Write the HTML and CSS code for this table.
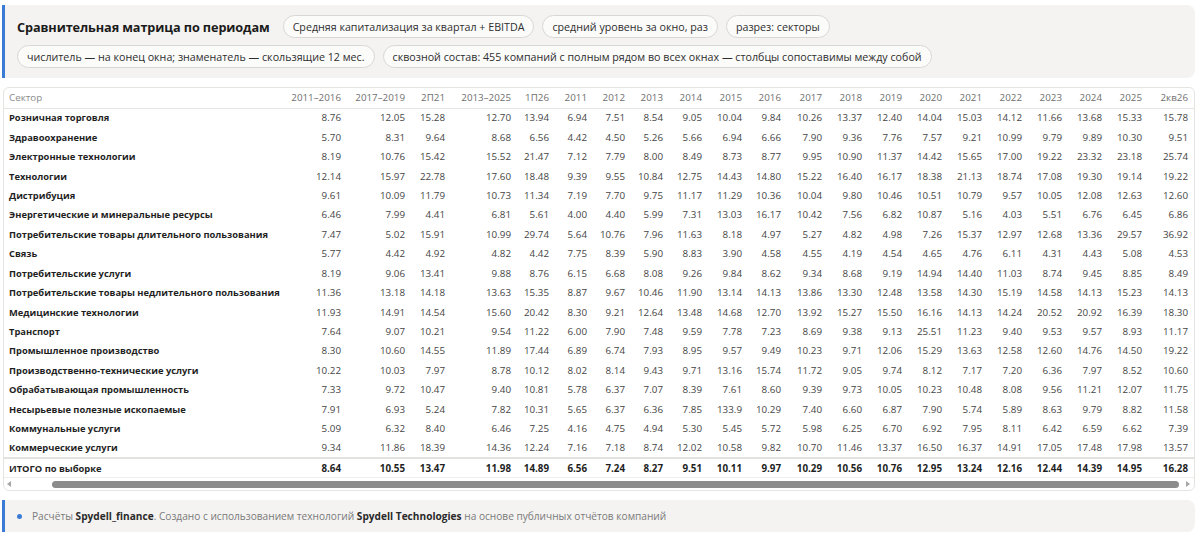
FILE: index.html
```html
<!DOCTYPE html>
<html lang="ru">
<head>
<meta charset="utf-8">
<title>Сравнительная матрица по периодам</title>
<link rel="stylesheet" href="styles.css">
</head>
<body>
<div class="page">
  <section class="head-card">
    <div class="head-row">
      <h1 class="title">Сравнительная матрица по периодам</h1>
      <span class="chip">Средняя капитализация за квартал + EBITDA</span>
      <span class="chip">средний уровень за окно, раз</span>
      <span class="chip">разрез: секторы</span>
    </div>
    <div class="head-row">
      <span class="chip">числитель — на конец окна; знаменатель — скользящие 12 мес.</span>
      <span class="chip">сквозной состав: 455 компаний с полным рядом во всех окнах — столбцы сопоставимы между собой</span>
    </div>
  </section>

  <section class="table-box">
    <table class="matrix">
      <colgroup>
        <col class="c-sector">
        <col class="w64"><col class="w64"><col class="w40"><col class="w66"><col class="w38">
        <col class="w38"><col class="w38"><col class="w38"><col class="w39"><col class="w40"><col class="w39"><col class="w41">
        <col class="w40"><col class="w40"><col class="w40"><col class="w40"><col class="w40"><col class="w40"><col class="w40"><col class="w40">
        <col class="w46">
      </colgroup>
      <thead>
        <tr><th class="sector">Сектор</th><th>2011–2016</th><th>2017–2019</th><th>2П21</th><th>2013–2025</th><th>1П26</th><th>2011</th><th>2012</th><th>2013</th><th>2014</th><th>2015</th><th>2016</th><th>2017</th><th>2018</th><th>2019</th><th>2020</th><th>2021</th><th>2022</th><th>2023</th><th>2024</th><th>2025</th><th>2кв26</th></tr>
      </thead>
      <tbody>
        <tr><td class="sector">Розничная торговля</td><td>8.76</td><td>12.05</td><td>15.28</td><td>12.70</td><td>13.94</td><td>6.94</td><td>7.51</td><td>8.54</td><td>9.05</td><td>10.04</td><td>9.84</td><td>10.26</td><td>13.37</td><td>12.40</td><td>14.04</td><td>15.03</td><td>14.12</td><td>11.66</td><td>13.68</td><td>15.33</td><td>15.78</td></tr>
        <tr><td class="sector">Здравоохранение</td><td>5.70</td><td>8.31</td><td>9.64</td><td>8.68</td><td>6.56</td><td>4.42</td><td>4.50</td><td>5.26</td><td>5.66</td><td>6.94</td><td>6.66</td><td>7.90</td><td>9.36</td><td>7.76</td><td>7.57</td><td>9.21</td><td>10.99</td><td>9.79</td><td>9.89</td><td>10.30</td><td>9.51</td></tr>
        <tr><td class="sector">Электронные технологии</td><td>8.19</td><td>10.76</td><td>15.42</td><td>15.52</td><td>21.47</td><td>7.12</td><td>7.79</td><td>8.00</td><td>8.49</td><td>8.73</td><td>8.77</td><td>9.95</td><td>10.90</td><td>11.37</td><td>14.42</td><td>15.65</td><td>17.00</td><td>19.22</td><td>23.32</td><td>23.18</td><td>25.74</td></tr>
        <tr><td class="sector">Технологии</td><td>12.14</td><td>15.97</td><td>22.78</td><td>17.60</td><td>18.48</td><td>9.39</td><td>9.55</td><td>10.84</td><td>12.75</td><td>14.43</td><td>14.80</td><td>15.22</td><td>16.40</td><td>16.17</td><td>18.38</td><td>21.13</td><td>18.74</td><td>17.08</td><td>19.30</td><td>19.14</td><td>19.22</td></tr>
        <tr><td class="sector">Дистрибуция</td><td>9.61</td><td>10.09</td><td>11.79</td><td>10.73</td><td>11.34</td><td>7.19</td><td>7.70</td><td>9.75</td><td>11.17</td><td>11.29</td><td>10.36</td><td>10.04</td><td>9.80</td><td>10.46</td><td>10.51</td><td>10.79</td><td>9.57</td><td>10.05</td><td>12.08</td><td>12.63</td><td>12.60</td></tr>
        <tr><td class="sector">Энергетические и минеральные ресурсы</td><td>6.46</td><td>7.99</td><td>4.41</td><td>6.81</td><td>5.61</td><td>4.00</td><td>4.40</td><td>5.99</td><td>7.31</td><td>13.03</td><td>16.17</td><td>10.42</td><td>7.56</td><td>6.82</td><td>10.87</td><td>5.16</td><td>4.03</td><td>5.51</td><td>6.76</td><td>6.45</td><td>6.86</td></tr>
        <tr><td class="sector">Потребительские товары длительного пользования</td><td>7.47</td><td>5.02</td><td>15.91</td><td>10.99</td><td>29.74</td><td>5.64</td><td>10.76</td><td>7.96</td><td>11.63</td><td>8.18</td><td>4.97</td><td>5.27</td><td>4.82</td><td>4.98</td><td>7.26</td><td>15.37</td><td>12.97</td><td>12.68</td><td>13.36</td><td>29.57</td><td>36.92</td></tr>
        <tr><td class="sector">Связь</td><td>5.77</td><td>4.42</td><td>4.92</td><td>4.82</td><td>4.42</td><td>7.75</td><td>8.39</td><td>5.90</td><td>8.83</td><td>3.90</td><td>4.58</td><td>4.55</td><td>4.19</td><td>4.54</td><td>4.65</td><td>4.76</td><td>6.11</td><td>4.31</td><td>4.43</td><td>5.08</td><td>4.53</td></tr>
        <tr><td class="sector">Потребительские услуги</td><td>8.19</td><td>9.06</td><td>13.41</td><td>9.88</td><td>8.76</td><td>6.15</td><td>6.68</td><td>8.08</td><td>9.26</td><td>9.84</td><td>8.62</td><td>9.34</td><td>8.68</td><td>9.19</td><td>14.94</td><td>14.40</td><td>11.03</td><td>8.74</td><td>9.45</td><td>8.85</td><td>8.49</td></tr>
        <tr><td class="sector">Потребительские товары недлительного пользования</td><td>11.36</td><td>13.18</td><td>14.18</td><td>13.63</td><td>15.35</td><td>8.87</td><td>9.67</td><td>10.46</td><td>11.90</td><td>13.14</td><td>14.13</td><td>13.86</td><td>13.30</td><td>12.48</td><td>13.58</td><td>14.30</td><td>15.19</td><td>14.58</td><td>14.13</td><td>15.23</td><td>14.13</td></tr>
        <tr><td class="sector">Медицинские технологии</td><td>11.93</td><td>14.91</td><td>14.54</td><td>15.60</td><td>20.42</td><td>8.30</td><td>9.21</td><td>12.64</td><td>13.48</td><td>14.68</td><td>12.70</td><td>13.92</td><td>15.27</td><td>15.50</td><td>16.16</td><td>14.13</td><td>14.24</td><td>20.52</td><td>20.92</td><td>16.39</td><td>18.30</td></tr>
        <tr><td class="sector">Транспорт</td><td>7.64</td><td>9.07</td><td>10.21</td><td>9.54</td><td>11.22</td><td>6.00</td><td>7.90</td><td>7.48</td><td>9.59</td><td>7.78</td><td>7.23</td><td>8.69</td><td>9.38</td><td>9.13</td><td>25.51</td><td>11.23</td><td>9.40</td><td>9.53</td><td>9.57</td><td>8.93</td><td>11.17</td></tr>
        <tr><td class="sector">Промышленное производство</td><td>8.30</td><td>10.60</td><td>14.55</td><td>11.89</td><td>17.44</td><td>6.89</td><td>6.74</td><td>7.93</td><td>8.95</td><td>9.57</td><td>9.49</td><td>10.23</td><td>9.71</td><td>12.06</td><td>15.29</td><td>13.63</td><td>12.58</td><td>12.60</td><td>14.76</td><td>14.50</td><td>19.22</td></tr>
        <tr><td class="sector">Производственно-технические услуги</td><td>10.22</td><td>10.03</td><td>7.97</td><td>8.78</td><td>10.12</td><td>8.02</td><td>8.14</td><td>9.43</td><td>9.71</td><td>13.16</td><td>15.74</td><td>11.72</td><td>9.05</td><td>9.74</td><td>8.12</td><td>7.17</td><td>7.20</td><td>6.36</td><td>7.97</td><td>8.52</td><td>10.60</td></tr>
        <tr><td class="sector">Обрабатывающая промышленность</td><td>7.33</td><td>9.72</td><td>10.47</td><td>9.40</td><td>10.81</td><td>5.78</td><td>6.37</td><td>7.07</td><td>8.39</td><td>7.61</td><td>8.60</td><td>9.39</td><td>9.73</td><td>10.05</td><td>10.23</td><td>10.48</td><td>8.08</td><td>9.56</td><td>11.21</td><td>12.07</td><td>11.75</td></tr>
        <tr><td class="sector">Несырьевые полезные ископаемые</td><td>7.91</td><td>6.93</td><td>5.24</td><td>7.82</td><td>10.31</td><td>5.65</td><td>6.37</td><td>6.36</td><td>7.85</td><td>133.9</td><td>10.29</td><td>7.40</td><td>6.60</td><td>6.87</td><td>7.90</td><td>5.74</td><td>5.89</td><td>8.63</td><td>9.79</td><td>8.82</td><td>11.58</td></tr>
        <tr><td class="sector">Коммунальные услуги</td><td>5.09</td><td>6.32</td><td>8.40</td><td>6.46</td><td>7.25</td><td>4.16</td><td>4.75</td><td>4.94</td><td>5.30</td><td>5.45</td><td>5.72</td><td>5.98</td><td>6.25</td><td>6.70</td><td>6.92</td><td>7.95</td><td>8.11</td><td>6.42</td><td>6.59</td><td>6.62</td><td>7.39</td></tr>
        <tr><td class="sector">Коммерческие услуги</td><td>9.34</td><td>11.86</td><td>18.39</td><td>14.36</td><td>12.24</td><td>7.16</td><td>7.18</td><td>8.74</td><td>12.02</td><td>10.58</td><td>9.82</td><td>10.70</td><td>11.46</td><td>13.37</td><td>16.50</td><td>16.37</td><td>14.91</td><td>17.05</td><td>17.48</td><td>17.98</td><td>13.57</td></tr>
      </tbody>
      <tfoot>
        <tr><td class="sector">ИТОГО по выборке</td><td>8.64</td><td>10.55</td><td>13.47</td><td>11.98</td><td>14.89</td><td>6.56</td><td>7.24</td><td>8.27</td><td>9.51</td><td>10.11</td><td>9.97</td><td>10.29</td><td>10.56</td><td>10.76</td><td>12.95</td><td>13.24</td><td>12.16</td><td>12.44</td><td>14.39</td><td>14.95</td><td>16.28</td></tr>
      </tfoot>
    </table>
    <div class="hscroll">
      <span class="arrow arrow-left"></span>
      <span class="thumb"></span>
      <span class="arrow arrow-right"></span>
    </div>
  </section>

  <footer class="foot-card">
    <span class="dot"></span>
    <p class="foot-text">Расчёты <b>Spydell_finance</b>. Создано с использованием технологий <b>Spydell Technologies</b> на основе публичных отчётов компаний</p>
  </footer>
</div>
</body>
</html>
```

FILE: styles.css
```css
* { box-sizing: border-box; }

html, body {
  margin: 0;
  padding: 0;
  background: #ffffff;
}

body {
  font-family: "Open Sans", "Noto Sans", "DejaVu Sans", sans-serif;
  color: #222;
  width: 1200px;
  height: 537px;
  overflow: hidden;
}

.page {
  display: flex;
  flex-direction: column;
  padding: 5px 5px 0 2px;
}

/* ---------- header card ---------- */
.head-card {
  background: #f4f3f1;
  border-left: 3px solid #3a7bd5;
  border-radius: 0 8px 8px 0;
  padding: 10px 12px 10px 12px;
  display: flex;
  flex-direction: column;
  gap: 7px;
  height: 73px;
}

.head-row {
  display: flex;
  align-items: center;
  gap: 8px;
  height: 23px;
}

.title {
  margin: 0 5px 0 0;
  font-size: 12.7px;
  font-weight: 700;
  color: #1b1b1b;
  letter-spacing: -0.1px;
  white-space: nowrap;
}

.chip {
  display: inline-flex;
  align-items: center;
  height: 23px;
  padding: 0 9px;
  border: 1px solid #d9d7d3;
  border-radius: 12px;
  background: #fbfbfa;
  font-size: 10.7px;
  color: #2e2e2e;
  white-space: nowrap;
}

/* ---------- table ---------- */
.table-box {
  margin: 9px 0 0 1px;
  border: 1px solid #e6e4e0;
  border-radius: 6px;
  background: #ffffff;
  overflow: hidden;
}

.matrix {
  width: 100%;
  table-layout: fixed;
  border-collapse: collapse;
  font-size: 9.8px;
}

.c-sector { width: auto; }
.w38 { width: 38px; }
.w39 { width: 39px; }
.w40 { width: 40px; }
.w41 { width: 41px; }
.w46 { width: 46px; }
.w64 { width: 64px; }
.w66 { width: 66px; }

.matrix th,
.matrix td {
  padding: 0 6px 0 0;
  text-align: right;
  white-space: nowrap;
  overflow: hidden;
}

.matrix th {
  height: 20px;
  font-weight: 400;
  color: #6f6f6f;
  border-bottom: 1px solid #e8e6e2;
}

.matrix td {
  height: 19.44px;
  color: #454545;
}

.matrix .sector {
  text-align: left;
  padding-left: 5px;
  padding-right: 0;
  font-weight: 700;
  font-size: 9.35px;
  color: #1f1f1f;
}

.matrix th.sector {
  font-weight: 400;
  font-size: 9.8px;
  color: #8a8a8a;
}

.matrix tfoot td {
  height: 20px;
  font-weight: 700;
  color: #1f1f1f;
  border-top: 2px solid #e4e2de;
  border-bottom: 1px solid #efeeeb;
}

/* fake horizontal scrollbar */
.hscroll {
  display: flex;
  align-items: center;
  height: 12px;
  padding: 0 4px 0 3px;
}

.arrow {
  width: 0;
  height: 0;
  border-top: 3px solid transparent;
  border-bottom: 3px solid transparent;
}

.arrow-left {
  border-right: 4px solid #a6a6a6;
  margin-right: 41px;
}

.arrow-right {
  border-left: 4px solid #a6a6a6;
  margin-left: 7px;
}

.thumb {
  flex: 1;
  height: 7px;
  border-radius: 4px;
  background: #8c8c8c;
}

/* ---------- footer ---------- */
.foot-card {
  margin-top: 9px;
  height: 32px;
  background: #f4f3f1;
  border-left: 3px solid #3a7bd5;
  border-radius: 0 8px 8px 0;
  display: flex;
  align-items: center;
  padding-left: 12px;
  gap: 10px;
}

.dot {
  width: 5px;
  height: 5px;
  border-radius: 50%;
  background: #3a7bd5;
  flex: none;
}

.foot-text {
  margin: 0;
  font-size: 10.15px;
  color: #7a7a7a;
}

.foot-text b {
  font-weight: 700;
  color: #2a2a2a;
}
```
